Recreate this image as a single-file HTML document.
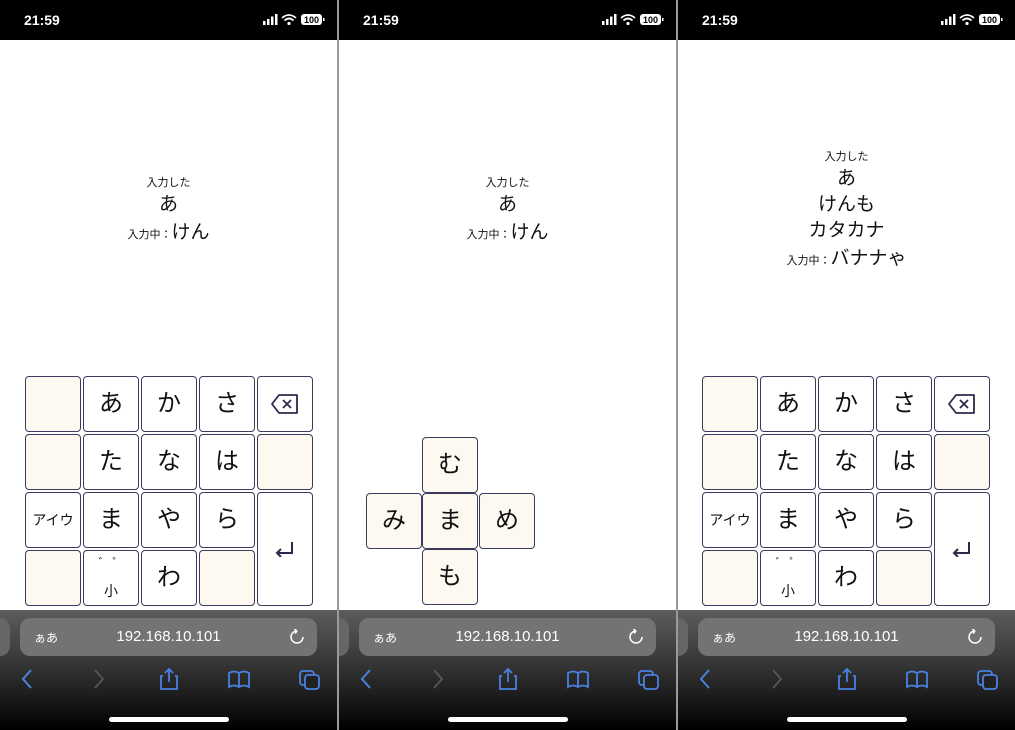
<!DOCTYPE html>
<html><head><meta charset="utf-8"><style>
*{margin:0;padding:0;box-sizing:border-box}
body{width:1015px;height:730px;background:#9a9a9a;position:relative;overflow:hidden;font-family:"Liberation Sans","Noto Sans CJK JP",sans-serif}
.p{position:absolute;top:0;width:337px;height:730px;background:#fff;overflow:hidden}
.sb{position:absolute;left:0;top:0;width:100%;height:40px;background:#000;color:#fff}
.tm{position:absolute;left:24px;top:12px;font-size:14px;font-weight:bold}
.ic{position:absolute;right:12px;top:13px}
.txt{position:absolute;left:0;width:100%;text-align:center;color:#111}
.s{font-size:11px}.b{font-size:19px}
.k{position:absolute;width:56px;height:56px;border:1px solid #3a3a5c;border-radius:4px;background:#fff;text-align:center;line-height:54px;font-size:24px;color:#111}
.e{background:#fdf8f0}
.bot{position:absolute;left:0;top:610px;width:100%;height:120px;background:linear-gradient(#5c5c5c,#3a3a3a 40%,#141414 80%,#000)}
.url{position:absolute;left:20px;top:8px;width:297px;height:38px;border-radius:10px;background:#737373;color:#fff}
.url .a{position:absolute;left:14px;top:11px;font-size:12px}
.url .u{position:absolute;left:0;width:100%;top:10px;text-align:center;font-size:15px}
.lft{position:absolute;left:-10px;top:8px;width:20px;height:38px;border-radius:10px;background:#666}
.home{position:absolute;left:109px;top:107px;width:120px;height:5px;border-radius:3px;background:#fff}
.tb{position:absolute;top:57px}
</style></head><body>

<!-- PANEL TEMPLATE -->
<div class="p" style="left:0">
 <div class="sb"><div class="tm">21:59</div>
 <svg class="ic" width="62" height="14" viewBox="0 0 62 14"><rect x="0" y="8" width="2.5" height="4" fill="#fff"/><rect x="4" y="6" width="2.5" height="6" fill="#fff"/><rect x="8" y="3.5" width="2.5" height="8.5" fill="#fff"/><rect x="12" y="1" width="2.5" height="11" fill="#fff"/><path d="M19 5 Q26 -1 33 5 M21.5 7.5 Q26 3.5 30.5 7.5" stroke="#fff" stroke-width="1.8" fill="none"/><circle cx="26" cy="10.5" r="1.6" fill="#fff"/><rect x="38" y="1" width="21" height="11" rx="3" fill="#fff"/><rect x="60" y="5" width="1.5" height="3" fill="#fff"/><text x="48.5" y="10" font-size="9" font-weight="bold" text-anchor="middle" fill="#000" font-family="Liberation Sans">100</text></svg></div>
 <div class="txt s" style="top:174px">入力した</div>
 <div class="txt b" style="top:189px">あ</div>
 <div class="txt" style="top:217px"><span class="s">入力中：</span><span class="b">けん</span></div>
 <div class="k e" style="left:25px;top:376px"></div><div class="k" style="left:83px;top:376px">あ</div><div class="k" style="left:141px;top:376px">か</div><div class="k" style="left:199px;top:376px">さ</div>
 <div class="k" style="left:257px;top:376px"><svg width="30" height="22" viewBox="0 0 30 22" style="margin-top:16px"><path d="M9 2H27V20H9L2 11Z" stroke="#2a2a4a" stroke-width="1.8" fill="none" stroke-linejoin="round"/><path d="M13 7L21 15M21 7L13 15" stroke="#2a2a4a" stroke-width="1.8"/></svg></div>
 <div class="k e" style="left:25px;top:434px"></div><div class="k" style="left:83px;top:434px">た</div><div class="k" style="left:141px;top:434px">な</div><div class="k" style="left:199px;top:434px">は</div><div class="k e" style="left:257px;top:434px"></div>
 <div class="k" style="left:25px;top:492px;font-size:14px">アイウ</div><div class="k" style="left:83px;top:492px">ま</div><div class="k" style="left:141px;top:492px">や</div><div class="k" style="left:199px;top:492px">ら</div>
 <div class="k" style="left:257px;top:492px;height:114px"><svg width="22" height="16" viewBox="0 0 22 16" style="margin-top:48px"><path d="M18 1V12H3M7 8L3 12L7 16" stroke="#2a2a4a" stroke-width="2" fill="none"/></svg></div>
 <div class="k e" style="left:25px;top:550px"></div><div class="k" style="left:83px;top:550px;font-size:14px;line-height:16px"><div style="margin-top:4px;font-size:11px">゛ ゜</div><div style="margin-top:12px">小</div></div><div class="k" style="left:141px;top:550px">わ</div><div class="k e" style="left:199px;top:550px"></div>
 <div class="bot"><div class="lft"></div><div class="url"><span class="a">ぁあ</span><div class="u">192.168.10.101</div><svg style="position:absolute;right:12px;top:11px" width="16" height="16" viewBox="0 0 16 16"><path d="M8 2A6 6 0 1 0 14 8M8 2L5.5 0M8 2L6 4.5" stroke="#fff" stroke-width="1.5" fill="none"/></svg></div>
 <svg class="tb" width="337" height="24" viewBox="0 0 337 24"><path d="M31 3L23 12L31 21" stroke="#4a80e0" stroke-width="2" fill="none"/><path d="M95 3L103 12L95 21" stroke="#555" stroke-width="2" fill="none"/><path d="M163 9H161V22H177V9H175M169 15V2M165 6L169 2L173 6" stroke="#4a80e0" stroke-width="1.8" fill="none"/><path d="M229 6Q234 3 239 6Q244 3 249 6V20Q244 17 239 20Q234 17 229 20ZM239 6V20" stroke="#4a80e0" stroke-width="1.8" fill="none"/><rect x="300" y="4" width="14" height="14" rx="3" stroke="#4a80e0" stroke-width="1.8" fill="none"/><rect x="305" y="8" width="14" height="14" rx="3" stroke="#4a80e0" stroke-width="1.8" fill="#222"/></svg>
 <div class="home"></div></div>
</div>

<div class="p" style="left:339px">
 <div class="sb"><div class="tm">21:59</div>
 <svg class="ic" width="62" height="14" viewBox="0 0 62 14"><rect x="0" y="8" width="2.5" height="4" fill="#fff"/><rect x="4" y="6" width="2.5" height="6" fill="#fff"/><rect x="8" y="3.5" width="2.5" height="8.5" fill="#fff"/><rect x="12" y="1" width="2.5" height="11" fill="#fff"/><path d="M19 5 Q26 -1 33 5 M21.5 7.5 Q26 3.5 30.5 7.5" stroke="#fff" stroke-width="1.8" fill="none"/><circle cx="26" cy="10.5" r="1.6" fill="#fff"/><rect x="38" y="1" width="21" height="11" rx="3" fill="#fff"/><rect x="60" y="5" width="1.5" height="3" fill="#fff"/><text x="48.5" y="10" font-size="9" font-weight="bold" text-anchor="middle" fill="#000" font-family="Liberation Sans">100</text></svg></div>
 <div class="txt s" style="top:174px">入力した</div>
 <div class="txt b" style="top:189px">あ</div>
 <div class="txt" style="top:217px"><span class="s">入力中：</span><span class="b">けん</span></div>
 <div class="k" style="left:83px;top:437px;background:#fdf8f0">む</div>
 <div class="k" style="left:27px;top:493px;background:#fdf8f0">み</div><div class="k" style="left:83px;top:493px;background:#fdf8f0">ま</div><div class="k" style="left:140px;top:493px;background:#fdf8f0">め</div>
 <div class="k" style="left:83px;top:549px;background:#fdf8f0">も</div>
 <div class="bot"><div class="lft"></div><div class="url"><span class="a">ぁあ</span><div class="u">192.168.10.101</div><svg style="position:absolute;right:12px;top:11px" width="16" height="16" viewBox="0 0 16 16"><path d="M8 2A6 6 0 1 0 14 8M8 2L5.5 0M8 2L6 4.5" stroke="#fff" stroke-width="1.5" fill="none"/></svg></div>
 <svg class="tb" width="337" height="24" viewBox="0 0 337 24"><path d="M31 3L23 12L31 21" stroke="#4a80e0" stroke-width="2" fill="none"/><path d="M95 3L103 12L95 21" stroke="#555" stroke-width="2" fill="none"/><path d="M163 9H161V22H177V9H175M169 15V2M165 6L169 2L173 6" stroke="#4a80e0" stroke-width="1.8" fill="none"/><path d="M229 6Q234 3 239 6Q244 3 249 6V20Q244 17 239 20Q234 17 229 20ZM239 6V20" stroke="#4a80e0" stroke-width="1.8" fill="none"/><rect x="300" y="4" width="14" height="14" rx="3" stroke="#4a80e0" stroke-width="1.8" fill="none"/><rect x="305" y="8" width="14" height="14" rx="3" stroke="#4a80e0" stroke-width="1.8" fill="#222"/></svg>
 <div class="home"></div></div>
</div>

<div class="p" style="left:678px">
 <div class="sb"><div class="tm">21:59</div>
 <svg class="ic" width="62" height="14" viewBox="0 0 62 14"><rect x="0" y="8" width="2.5" height="4" fill="#fff"/><rect x="4" y="6" width="2.5" height="6" fill="#fff"/><rect x="8" y="3.5" width="2.5" height="8.5" fill="#fff"/><rect x="12" y="1" width="2.5" height="11" fill="#fff"/><path d="M19 5 Q26 -1 33 5 M21.5 7.5 Q26 3.5 30.5 7.5" stroke="#fff" stroke-width="1.8" fill="none"/><circle cx="26" cy="10.5" r="1.6" fill="#fff"/><rect x="38" y="1" width="21" height="11" rx="3" fill="#fff"/><rect x="60" y="5" width="1.5" height="3" fill="#fff"/><text x="48.5" y="10" font-size="9" font-weight="bold" text-anchor="middle" fill="#000" font-family="Liberation Sans">100</text></svg></div>
 <div class="txt s" style="top:148px">入力した</div>
 <div class="txt b" style="top:163px">あ</div>
 <div class="txt b" style="top:189px">けんも</div>
 <div class="txt b" style="top:215px">カタカナ</div>
 <div class="txt" style="top:243px"><span class="s">入力中：</span><span class="b">バナナゃ</span></div>
 <div class="k e" style="left:24px;top:376px"></div><div class="k" style="left:82px;top:376px">あ</div><div class="k" style="left:140px;top:376px">か</div><div class="k" style="left:198px;top:376px">さ</div>
 <div class="k" style="left:256px;top:376px"><svg width="30" height="22" viewBox="0 0 30 22" style="margin-top:16px"><path d="M9 2H27V20H9L2 11Z" stroke="#2a2a4a" stroke-width="1.8" fill="none" stroke-linejoin="round"/><path d="M13 7L21 15M21 7L13 15" stroke="#2a2a4a" stroke-width="1.8"/></svg></div>
 <div class="k e" style="left:24px;top:434px"></div><div class="k" style="left:82px;top:434px">た</div><div class="k" style="left:140px;top:434px">な</div><div class="k" style="left:198px;top:434px">は</div><div class="k e" style="left:256px;top:434px"></div>
 <div class="k" style="left:24px;top:492px;font-size:14px">アイウ</div><div class="k" style="left:82px;top:492px">ま</div><div class="k" style="left:140px;top:492px">や</div><div class="k" style="left:198px;top:492px">ら</div>
 <div class="k" style="left:256px;top:492px;height:114px"><svg width="22" height="16" viewBox="0 0 22 16" style="margin-top:48px"><path d="M18 1V12H3M7 8L3 12L7 16" stroke="#2a2a4a" stroke-width="2" fill="none"/></svg></div>
 <div class="k e" style="left:24px;top:550px"></div><div class="k" style="left:82px;top:550px;font-size:14px;line-height:16px"><div style="margin-top:4px;font-size:11px">゛ ゜</div><div style="margin-top:12px">小</div></div><div class="k" style="left:140px;top:550px">わ</div><div class="k e" style="left:198px;top:550px"></div>
 <div class="bot"><div class="lft"></div><div class="url"><span class="a">ぁあ</span><div class="u">192.168.10.101</div><svg style="position:absolute;right:12px;top:11px" width="16" height="16" viewBox="0 0 16 16"><path d="M8 2A6 6 0 1 0 14 8M8 2L5.5 0M8 2L6 4.5" stroke="#fff" stroke-width="1.5" fill="none"/></svg></div>
 <svg class="tb" width="337" height="24" viewBox="0 0 337 24"><path d="M31 3L23 12L31 21" stroke="#4a80e0" stroke-width="2" fill="none"/><path d="M95 3L103 12L95 21" stroke="#555" stroke-width="2" fill="none"/><path d="M163 9H161V22H177V9H175M169 15V2M165 6L169 2L173 6" stroke="#4a80e0" stroke-width="1.8" fill="none"/><path d="M229 6Q234 3 239 6Q244 3 249 6V20Q244 17 239 20Q234 17 229 20ZM239 6V20" stroke="#4a80e0" stroke-width="1.8" fill="none"/><rect x="300" y="4" width="14" height="14" rx="3" stroke="#4a80e0" stroke-width="1.8" fill="none"/><rect x="305" y="8" width="14" height="14" rx="3" stroke="#4a80e0" stroke-width="1.8" fill="#222"/></svg>
 <div class="home"></div></div>
</div>
</body></html>
